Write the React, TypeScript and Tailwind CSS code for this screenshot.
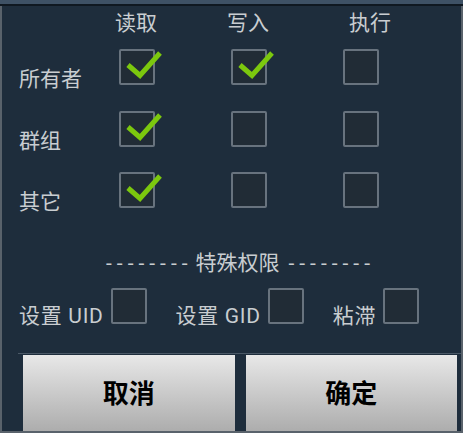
import React from 'react';

const font = "font-['Roboto','Noto_Sans_CJK_SC',sans-serif]";

const Check = () => (
    <svg className="absolute left-0 top-0 overflow-visible" width="36" height="36" viewBox="0 0 36 36">
        <path d="M7 14 L19 24.5 L39 2" fill="none" stroke="#7cc80e" strokeWidth="5" strokeLinecap="butt" strokeLinejoin="miter" />
    </svg>
);

const Box: React.FC<{ checked?: boolean }> = ({ checked }) => (
    <div className="relative w-[36px] h-[36px] shrink-0 rounded-[2px] border-2 border-[#68737e] bg-[#212c36]">
        {checked && <Check />}
    </div>
);

const rows = [
    { name: '所有者', perms: [true, true, false], mt: 'mt-0' },
    { name: '群组', perms: [true, false, false], mt: 'mt-[26px]' },
    { name: '其它', perms: [true, false, false], mt: 'mt-[25px]' },
];

export default function App() {
    return (
        <div className={`w-[463px] h-[433px] flex flex-col bg-[#1e2d3c] text-[#c9cdd1] ${font}`}>
            {/* Top band */}
            <div className="h-[4px] bg-[#3e5165] shrink-0" />
            <div className="h-[2px] bg-[#0f1821] shrink-0" />

            <div className="flex-1 flex flex-col border-l-2 border-r-2 border-b-2 border-[#59626b]">
                {/* Header */}
                <div className="h-[43px] flex text-[21px] leading-[24px] pt-[5px] pl-[113px]">
                    <span className="w-[112px]">读取</span>
                    <span className="w-[122px]">写入</span>
                    <span>执行</span>
                </div>

                {/* Permission rows */}
                {rows.map((row) => (
                    <div key={row.name} className={`flex items-end h-[36px] pl-[17px] ${row.mt}`}>
                        <span className="w-[100px] text-[21px] leading-none translate-y-[5px]">{row.name}</span>
                        {row.perms.map((p, i) => (
                            <div key={i} className="w-[112px]">
                                <Box checked={p} />
                            </div>
                        ))}
                    </div>
                ))}

                {/* Special permissions */}
                <div className="mt-[43px] pl-[18px] flex justify-center items-center text-[21px] leading-[24px]">
                    <span className="tracking-[5px]">--------</span>
                    <span className="ml-[3px] mr-[9px]">特殊权限</span>
                    <span className="tracking-[5px]">--------</span>
                </div>

                <div className="mt-[13px] flex items-end h-[36px] pl-[17px] text-[21px] leading-none tracking-[0.7px]">
                    <span className="translate-y-[3px]">设置 UID</span>
                    <div className="ml-[7px]"><Box /></div>
                    <span className="ml-[29px] translate-y-[3px]">设置 GID</span>
                    <div className="ml-[7px]"><Box /></div>
                    <span className="ml-[29px] translate-y-[3px]">粘滞</span>
                    <div className="ml-[7px]"><Box /></div>
                </div>

                {/* Buttons */}
                <div className="mt-[29px] ml-[16px] h-px bg-[#4a5866]" />
                <div className="flex-1 flex pl-[21px] pr-[4px] pt-px gap-[11px]">
                    <button className="flex-1 flex items-center justify-center pt-[3px] bg-gradient-to-b from-[#e8e8e8] to-[#adadad] text-black text-[26px] font-bold">
                        取消
                    </button>
                    <button className="flex-1 flex items-center justify-center pt-[3px] bg-gradient-to-b from-[#e8e8e8] to-[#adadad] text-black text-[26px] font-bold">
                        确定
                    </button>
                </div>
            </div>
        </div>
    );
}
